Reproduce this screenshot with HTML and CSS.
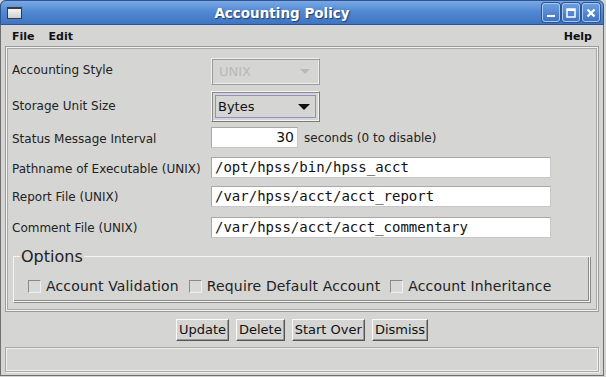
FILE: index.html
```html
<!DOCTYPE html>
<html lang="en">
<head>
  <meta charset="UTF-8">
  <title>Accounting Policy</title>
  <link rel="stylesheet" href="styles.css">
</head>
<body>
  <div class="window">
    <div class="titlebar">
      <span class="win-icon"></span>
      <span class="title">Accounting Policy</span>
      <div class="win-buttons">
        <span class="win-btn">
          <svg width="10" height="10" viewBox="0 0 10 10"><rect x="1" y="7" width="8" height="2" fill="#fff"/></svg>
        </span>
        <span class="win-btn">
          <svg width="10" height="10" viewBox="0 0 10 10"><rect x="1" y="1" width="8" height="8" fill="none" stroke="#fff" stroke-width="1.5"/><rect x="1" y="1" width="8" height="2" fill="#fff"/></svg>
        </span>
        <span class="win-btn">
          <svg width="10" height="10" viewBox="0 0 10 10"><path d="M1.5 1.5 L8.5 8.5 M8.5 1.5 L1.5 8.5" stroke="#fff" stroke-width="2.2"/></svg>
        </span>
      </div>
    </div>
    <div class="menubar">
      <span>File</span>
      <span>Edit</span>
      <span class="spacer"></span>
      <span>Help</span>
    </div>

    <div class="panel">
      <div class="form">
        <label>Accounting Style</label>
        <div class="combo disabled"><span>UNIX</span><span class="arrow"></span></div>

        <label>Storage Unit Size</label>
        <div class="combo focused"><span>Bytes</span><span class="arrow"></span></div>

        <label>Status Message Interval</label>
        <div class="inline">
          <div class="field short">30</div>
          <span>seconds (0 to disable)</span>
        </div>

        <label>Pathname of Executable (UNIX)</label>
        <div class="field mono">/opt/hpss/bin/hpss_acct</div>

        <label>Report File (UNIX)</label>
        <div class="field mono">/var/hpss/acct/acct_report</div>

        <label>Comment File (UNIX)</label>
        <div class="field mono">/var/hpss/acct/acct_commentary</div>
      </div>

      <fieldset class="options">
        <legend>Options</legend>
        <label class="check"><span class="box"></span>Account Validation</label>
        <label class="check"><span class="box"></span>Require Default Account</label>
        <label class="check"><span class="box"></span>Account Inheritance</label>
      </fieldset>
    </div>

    <div class="actions">
      <button>Update</button>
      <button>Delete</button>
      <button>Start Over</button>
      <button>Dismiss</button>
    </div>

    <div class="statusbar"></div>
  </div>
</body>
</html>
```

FILE: styles.css
```css
* {
  margin: 0;
  padding: 0;
  box-sizing: border-box;
  font-family: "DejaVu Sans", sans-serif;
}
body {
  width: 606px;
  height: 377px;
  background: #d4d4d4;
  overflow: hidden;
}
.window {
  width: 604px;
  height: 376px;
  background: #d5d5d3;
  border: 1px solid #6f6f6f;
  border-top: none;
  border-radius: 6px 6px 0 0;
  display: flex;
  flex-direction: column;
}

/* title bar */
.titlebar {
  height: 25px;
  display: flex;
  align-items: center;
  padding: 0 3px 0 6px;
  background: linear-gradient(#7aa8e4, #5289d3 45%, #3f74c2);
  border: 1px solid #2c5591;
  border-radius: 6px 6px 0 0;
  margin: 0 -1px;
}
.win-icon {
  width: 15px;
  height: 12px;
  background: linear-gradient(#f4f4f4, #cfcfcf);
  border: 1px solid #3a3a3a;
  border-top-width: 2px;
}
.title {
  flex: 1;
  text-align: center;
  color: #fff;
  font-weight: bold;
  font-size: 13.5px;
  text-shadow: 1px 1px 1px #1f3d6b;
}
.win-buttons {
  display: flex;
  gap: 2px;
}
.win-btn {
  width: 18px;
  height: 19px;
  display: flex;
  align-items: center;
  justify-content: center;
  background: linear-gradient(#6b9de0, #3f74c2);
  border: 1px solid #a9c6ee;
  border-radius: 3px;
  box-shadow: 0 0 0 1px #2c5591;
}

/* menu bar */
.menubar {
  height: 20px;
  display: flex;
  align-items: center;
  gap: 14px;
  padding: 2px 11px 0 11px;
  font-size: 11px;
  font-weight: bold;
}
.menubar span {
  font-weight: bold;
  color: #111;
}
.menubar .spacer {
  flex: 1;
}

/* main panel */
.panel {
  margin: 1px 4px 0 4px;
  height: 266px;
  border: 1px solid #9a9a9a;
  box-shadow: inset 1px 1px 0 #f2f2f2, inset -1px -1px 0 #f2f2f2, inset 2px 2px 0 #a8a8a8, inset -2px -2px 0 #a8a8a8;
  padding: 11px 8px 0 6px;
}
.form {
  display: grid;
  grid-template-columns: 199px 1fr;
  grid-template-rows: 33px 36px 30px 29px 31px 21px;
  align-items: start;
  font-size: 12px;
  color: #222;
}
.form label {
  align-self: start;
  color: #222;
  font-size: 12px;
  padding-top: 4px;
}
.form label:nth-of-type(1) { padding-top: 5px; }
.form label:nth-of-type(2) { padding-top: 8px; }
.form label:nth-of-type(3) { padding-top: 5px; }
.form label:nth-of-type(4) { padding-top: 5px; }

.combo {
  width: 109px;
  display: flex;
  align-items: center;
  justify-content: space-between;
  font-size: 13px;
  background: #d5d5d3;
}
.combo.disabled {
  height: 27px;
  color: #b9b9b9;
  border: 1px solid #efefef;
  border-right-color: #9b9b9b;
  border-bottom-color: #9b9b9b;
  box-shadow: inset 1px 1px 0 #9b9b9b, inset -1px -1px 0 #efefef;
  padding: 0 9px 0 7px;
}
.combo.focused {
  height: 31px;
  color: #111;
  border: 1px solid #f4f4f4;
  border-right-color: #7a7a7a;
  border-bottom-color: #7a7a7a;
  box-shadow: inset 1px 1px 0 #8a8a8a, inset -1px -1px 0 #f4f4f4, inset 0 0 0 3px #d5d5d3, inset 0 0 0 4px #9090c8;
  padding: 0 9px 0 6px;
}
.arrow {
  width: 0;
  height: 0;
  border-left: 6px solid transparent;
  border-right: 6px solid transparent;
  border-top: 6px solid #111;
}
.combo.disabled .arrow {
  border-top-color: #b9b9b9;
  border-left-width: 5px;
  border-right-width: 5px;
  border-top-width: 5px;
}

.inline {
  display: flex;
  align-items: center;
  gap: 6px;
}
.field {
  height: 21px;
  line-height: 19px;
  background: #fff;
  border: 1px solid #c8c8c8;
  border-top-color: #a8a8a8;
  border-left-color: #a8a8a8;
  color: #111;
  padding: 0 3px;
  white-space: nowrap;
}
.field.short {
  width: 87px;
  text-align: right;
  font-size: 14px;
}
.field.mono {
  width: 340px;
  font-family: "DejaVu Sans Mono", monospace;
  font-size: 14px;
}

/* options group */
.options {
  margin: 11px 0 0 1px;
  height: 53px;
  border: 1px solid #f4f4f4;
  box-shadow: 1px 1px 0 #8a8a8a, inset -1px -1px 0 #8a8a8a;
  display: flex;
  align-items: center;
  gap: 10px;
  padding: 7px 0 0 14px;
}
.options legend {
  font-size: 16px;
  color: #222;
  padding: 0 1px;
  margin-left: -8px;
  line-height: 15px;
}
.check {
  display: flex;
  align-items: center;
  font-size: 14px;
  letter-spacing: 0.15px;
  color: #222;
}
.box {
  width: 13px;
  height: 13px;
  border: 1px solid #8a8a8a;
  border-right-color: #f0f0f0;
  border-bottom-color: #f0f0f0;
  background: #d8d8d8;
  margin-right: 5px;
}

/* buttons */
.actions {
  height: 34px;
  display: flex;
  justify-content: center;
  align-items: center;
  gap: 7px;
  padding-top: 1px;
}
.actions button {
  height: 22px;
  font-size: 13px;
  color: #111;
  background: #d5d5d3;
  padding: 0 2px;
  border: 1px solid #fafafa;
  border-right-color: #555;
  border-bottom-color: #555;
  box-shadow: inset -1px -1px 0 #9a9a9a;
}

/* status bar */
.statusbar {
  height: 25px;
  margin: 1px 4px 0 4px;
  border: 1px solid #a8a8a8;
  box-shadow: inset 1px 1px 0 #f0f0f0, inset -1px -1px 0 #f0f0f0, 1px 1px 0 #f0f0f0;
}
```
